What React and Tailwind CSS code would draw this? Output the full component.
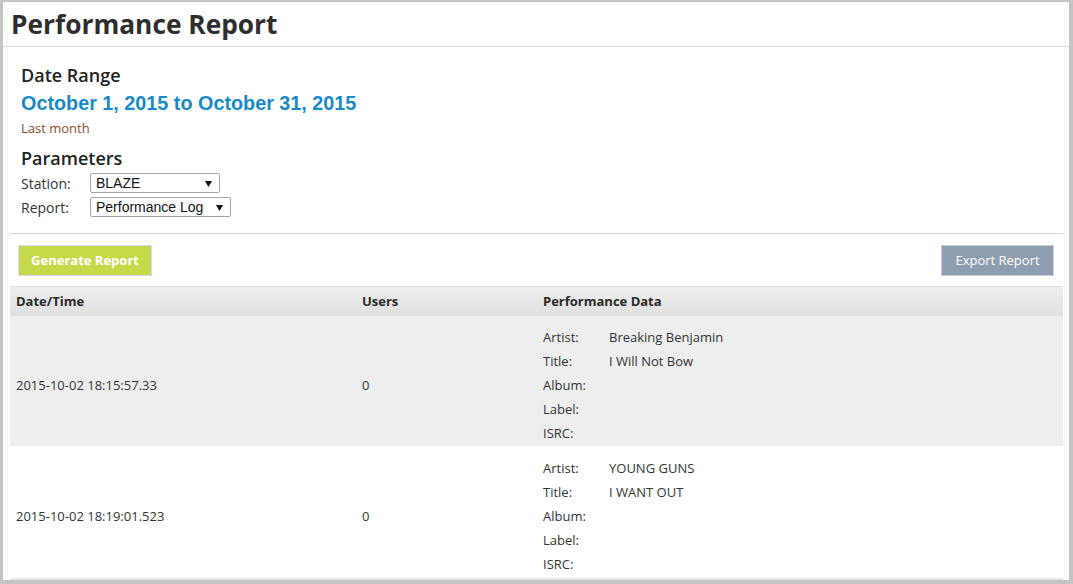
const rows = [
  {
    time: "2015-10-02 18:15:57.33",
    users: "0",
    artist: "Breaking Benjamin",
    title: "I Will Not Bow",
    shaded: true,
  },
  {
    time: "2015-10-02 18:19:01.523",
    users: "0",
    artist: "YOUNG GUNS",
    title: "I WANT OUT",
    shaded: false,
  },
];

const Select = ({ value, width }) => (
  <div
    className={`flex h-[20px] items-center justify-between rounded-[2px] border border-[#a6a6a6] bg-white pl-[5px] pr-[7px] font-['Liberation_Sans',Arial,sans-serif] text-[14px] leading-none text-[#111] ${width}`}
  >
    <span>{value}</span>
    <svg width="7" height="6" viewBox="0 0 7 6" className="mt-[1px]">
      <path d="M0 0h7L3.5 6z" fill="#111" />
    </svg>
  </div>
);

const DataLine = ({ label, value }) => (
  <div className="flex h-[24px] items-center">
    <span className="w-[66px]">{label}</span>
    <span>{value}</span>
  </div>
);

export default function App() {
  return (
    <div className="h-[584px] w-[1073px] bg-[#c4c4c4] pb-[4px] pl-[3px] pr-[4px] pt-[2px] font-['Open_Sans',sans-serif] text-[#333]">
      <div className="flex h-full flex-col overflow-hidden bg-white">
        {/* Title */}
        <div className="flex h-[45px] shrink-0 items-center border-b border-[#d8d8e0] px-[8px]">
          <h1 className="text-[26.3px] font-bold leading-none text-[#2e2e2e]">Performance Report</h1>
        </div>

        {/* Date range + parameters */}
        <div className="px-[18px] pt-[16px]">
          <h2 className="text-[18px] font-semibold leading-[24px] text-[#222]">Date Range</h2>
          <div className="mt-[2px] font-['Liberation_Sans',Arial,sans-serif] text-[19.8px] font-bold leading-[28px] text-[#1a8ac6]">
            October 1, 2015 to October 31, 2015
          </div>
          <div className="mt-[1px] text-[13px] leading-[20px] text-[#8a4a2c]">Last month</div>
          <h2 className="mt-[8px] text-[18px] font-semibold leading-[24px] text-[#222]">Parameters</h2>
          <div className="mt-[1px] flex h-[24px] items-center text-[14px]">
            <span className="w-[69px]">Station:</span>
            <Select value="BLAZE" width="w-[130px]" />
          </div>
          <div className="flex h-[24px] items-center text-[14px]">
            <span className="w-[69px]">Report:</span>
            <Select value="Performance Log" width="w-[141px]" />
          </div>
        </div>

        <div className="flex-1 pl-[7px] pr-[6px]">
          <div className="mt-[14px] border-t border-[#d6d6d6]" />

          {/* Actions */}
          <div className="mt-[11px] flex items-center justify-between pl-[8px] pr-[9px]">
            <button className="h-[31px] w-[134px] border border-[#ddd9ef] bg-[#c6d949] text-[13px] font-bold text-white">
              Generate Report
            </button>
            <button className="h-[31px] w-[113px] border border-[#c9cfd8] bg-[#8c9eaf] text-[13px] font-medium text-white">
              Export Report
            </button>
          </div>

          {/* Results */}
          <div className="mt-[10px] border-b-2 border-[#e8e8e8] text-[13px]">
            <div className="flex h-[30px] items-center border-t border-[#dcdcdc] bg-gradient-to-b from-[#eeeeee] to-[#e0e0e0] font-bold text-[#2a2a2a]">
              <div className="w-[346px] pl-[6px]">Date/Time</div>
              <div className="w-[181px] pl-[6px]">Users</div>
              <div className="flex-1 pl-[6px]">Performance Data</div>
            </div>
            {rows.map((r) => (
              <div
                key={r.time}
                className={`flex h-[131px] border-b border-white ${r.shaded ? "bg-[#eeeeee]" : "bg-white"}`}
              >
                <div className="flex w-[346px] items-center pl-[6px] pt-[10px]">{r.time}</div>
                <div className="flex w-[181px] items-center pl-[6px] pt-[10px]">{r.users}</div>
                <div className="flex-1 pl-[6px] pt-[10px]">
                  <DataLine label="Artist:" value={r.artist} />
                  <DataLine label="Title:" value={r.title} />
                  <DataLine label="Album:" value="" />
                  <DataLine label="Label:" value="" />
                  <DataLine label="ISRC:" value="" />
                </div>
              </div>
            ))}
          </div>
        </div>
      </div>
    </div>
  );
}
